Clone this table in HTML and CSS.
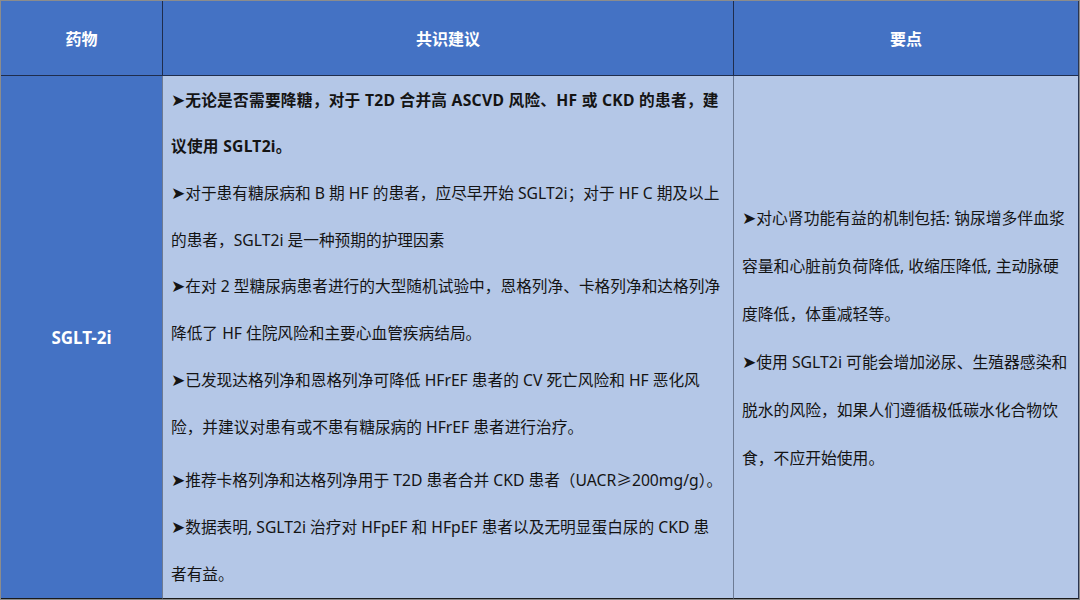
FILE: index.html
```html
<!DOCTYPE html>
<html lang="zh-CN">
<head>
<meta charset="utf-8">
<title>SGLT-2i</title>
<link rel="stylesheet" href="styles.css">
</head>
<body>
<div class="frame">
  <div class="table">
    <div class="cell head c1">药物</div>
    <div class="cell head c2">共识建议</div>
    <div class="cell head c3">要点</div>

    <div class="cell drug c1">SGLT-2i</div>
    <div class="cell body c2">
      <div class="lines">
        <p class="b"><span class="ar">➤</span>无论是否需要降糖，对于 T2D 合并高 ASCVD 风险、HF 或 CKD 的患者，建<br>议使用 SGLT2i。</p>
        <p><span class="ar">➤</span>对于患有糖尿病和 B 期 HF 的患者，应尽早开始 SGLT2i；对于 HF C 期及以上<br>的患者，SGLT2i 是一种预期的护理因素</p>
        <p><span class="ar">➤</span>在对 2 型糖尿病患者进行的大型随机试验中，恩格列净、卡格列净和达格列净<br>降低了 HF 住院风险和主要心血管疾病结局。</p>
        <p><span class="ar">➤</span>已发现达格列净和恩格列净可降低 HFrEF 患者的 CV 死亡风险和 HF 恶化风<br>险，并建议对患有或不患有糖尿病的 HFrEF 患者进行治疗。</p>
        <p class="gap"><span class="ar">➤</span>推荐卡格列净和达格列净用于 T2D 患者合并 CKD 患者（UACR≥200mg/g）。</p>
        <p><span class="ar">➤</span>数据表明, SGLT2i 治疗对 HFpEF 和 HFpEF 患者以及无明显蛋白尿的 CKD 患<br>者有益。</p>
      </div>
    </div>
    <div class="cell body c3">
      <div class="lines side">
        <p><span class="ar">➤</span>对心肾功能有益的机制包括: 钠尿增多伴血浆<br>容量和心脏前负荷降低, 收缩压降低, 主动脉硬<br>度降低，体重减轻等。</p>
        <p><span class="ar">➤</span>使用 SGLT2i 可能会增加泌尿、生殖器感染和<br>脱水的风险，如果人们遵循极低碳水化合物饮<br>食，不应开始使用。</p>
      </div>
    </div>
  </div>
</div>
</body>
</html>
```

FILE: styles.css
```css
html, body {
  margin: 0;
  padding: 0;
}
body {
  width: 1080px;
  height: 600px;
  background: #8c8c8c;
  font-family: "Noto Sans", "Noto Sans CJK SC", "DejaVu Sans", sans-serif;
  overflow: hidden;
}
.frame {
  padding: 1px 1px 1px 1px;
  height: 598px;
  box-sizing: content-box;
}
.table {
  display: grid;
  grid-template-columns: 162px 571px 345px;
  grid-template-rows: 75px 523px;
  width: 1078px;
  height: 598px;
  background: #b4c7e7;
}
.cell {
  box-sizing: border-box;
  display: flex;
  align-items: center;
}
.head {
  background: #4472c4;
  color: #ffffff;
  font-weight: 700;
  font-size: 16px;
  justify-content: center;
  border-right: 1px solid #1f2d4d;
  border-bottom: 1px solid #1f2d4d;
}
.drug {
  background: #4472c4;
  color: #ffffff;
  font-weight: 700;
  font-size: 17px;
  justify-content: center;
  border-right: 1px solid #6d7b94;
  border-bottom: 1px solid #1a1a1a;
}
.body {
  background: #b4c7e7;
  color: #141414;
  border-right: 1px solid #6d7b94;
  border-bottom: 1px solid #1a1a1a;
  padding-left: 8px;
}
.c3.head, .c3.body {
  border-right-color: #2a3550;
}
.lines {
  font-size: 15.7px;
  line-height: 46.7px;
  white-space: nowrap;
}
.lines p {
  margin: 0;
}
.lines .b {
  font-weight: 700;
  letter-spacing: 0.25px;
}
.lines .gap {
  margin-top: 7px;
}
.ar {
  font-family: "DejaVu Sans", sans-serif;
  font-size: 17px;
  font-weight: 400;
  letter-spacing: 0;
}
.side {
  line-height: 48px;
  padding-top: 2px;
  font-size: 15.8px;
}
```
